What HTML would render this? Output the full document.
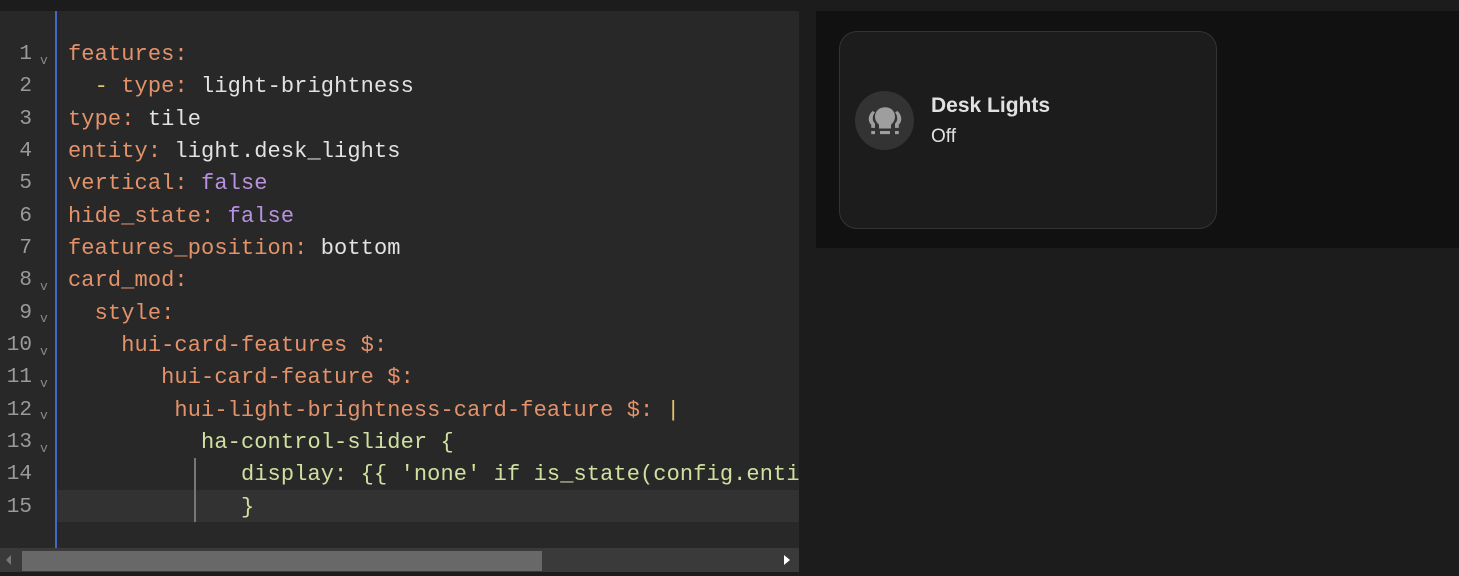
<!DOCTYPE html>
<html><head><meta charset="utf-8"><style>
*{margin:0;padding:0;box-sizing:border-box}
body{width:1459px;height:576px;background:#1c1c1c;position:relative;overflow:hidden;font-family:"Liberation Mono",monospace}
#ed{position:absolute;left:0;top:11px;width:799px;height:561px;background:#282828}
#bar{position:absolute;left:55px;top:11px;width:2px;height:537px;background:#4169c8}
.ln{position:absolute;left:0;width:32px;text-align:right;color:#9a9a9a;font-size:21px;height:32px;line-height:32px;margin-top:2px}
.fd{position:absolute;left:40px;color:#888;font-size:13px;line-height:12px}
.l{position:absolute;left:68px;white-space:pre;font-size:22px;letter-spacing:0.1px;height:32px;line-height:32px;color:#e2e2e2;margin-top:2px}
.k{color:#e3926a}.p{color:#b892e0}.g{color:#cfe0a0}.y{color:#e6c06e}
#act{position:absolute;left:57px;top:490px;width:742px;height:32px;background:#323232}
#guide{position:absolute;left:194px;top:458px;width:2px;height:64px;background:#777}
#sb{position:absolute;left:0;top:548px;width:799px;height:24px;background:#3a3a3a}
#th{position:absolute;left:22px;top:551px;width:520px;height:20px;background:#686868}
#rp{position:absolute;left:816px;top:11px;width:643px;height:237px;background:#111}
#card{position:absolute;left:839px;top:31px;width:378px;height:198px;background:#1c1c1c;border:1px solid #333;border-radius:18px}
#ic{position:absolute;left:855px;top:91px;width:59px;height:59px;border-radius:50%;background:#333}
.t{position:absolute;font-family:"Liberation Sans",sans-serif;color:#e1e1e1}
</style></head><body>
<div id="ed"></div>
<div id="act"></div>
<div id="guide"></div>
<div id="bar"></div>
<div class="ln" style="top:37px">1</div><div class="fd" style="top:55px">v</div>
<div class="ln" style="top:69px">2</div>
<div class="ln" style="top:102px">3</div>
<div class="ln" style="top:134px">4</div>
<div class="ln" style="top:166px">5</div>
<div class="ln" style="top:199px">6</div>
<div class="ln" style="top:231px">7</div>
<div class="ln" style="top:263px">8</div><div class="fd" style="top:281px">v</div>
<div class="ln" style="top:296px">9</div><div class="fd" style="top:313px">v</div>
<div class="ln" style="top:328px">10</div><div class="fd" style="top:346px">v</div>
<div class="ln" style="top:360px">11</div><div class="fd" style="top:378px">v</div>
<div class="ln" style="top:393px">12</div><div class="fd" style="top:410px">v</div>
<div class="ln" style="top:425px">13</div><div class="fd" style="top:443px">v</div>
<div class="ln" style="top:457px">14</div>
<div class="ln" style="top:490px">15</div>
<div class="l" style="top:37px"><span class="k">features:</span></div>
<div class="l" style="top:69px">  <span class="y">-</span> <span class="k">type:</span> light-brightness</div>
<div class="l" style="top:102px"><span class="k">type:</span> tile</div>
<div class="l" style="top:134px"><span class="k">entity:</span> light.desk_lights</div>
<div class="l" style="top:166px"><span class="k">vertical:</span> <span class="p">false</span></div>
<div class="l" style="top:199px"><span class="k">hide_state:</span> <span class="p">false</span></div>
<div class="l" style="top:231px"><span class="k">features_position:</span> bottom</div>
<div class="l" style="top:263px"><span class="k">card_mod:</span></div>
<div class="l" style="top:296px">  <span class="k">style:</span></div>
<div class="l" style="top:328px">    <span class="k">hui-card-features $:</span></div>
<div class="l" style="top:360px">       <span class="k">hui-card-feature $:</span></div>
<div class="l" style="top:393px">        <span class="k">hui-light-brightness-card-feature $:</span> <span class="y">|</span></div>
<div class="l" style="top:425px">          <span class="g">ha-control-slider {</span></div>
<div class="l" style="top:457px;width:731px;overflow:hidden">             <span class="g">display: {{ 'none' if is_state(config.entity, 'off') else 'flex' }};</span></div>
<div class="l" style="top:490px">             <span class="g">}</span></div>
<div id="sb"></div><div id="th"></div>
<div style="position:absolute;left:6px;top:555px;width:0;height:0;border-top:5px solid transparent;border-bottom:5px solid transparent;border-right:5px solid #777"></div>
<div style="position:absolute;left:784px;top:555px;width:0;height:0;border-top:5px solid transparent;border-bottom:5px solid transparent;border-left:6px solid #fff"></div>
<div id="rp"></div>
<div id="card"></div>
<div id="ic"></div>
<svg style="position:absolute;left:865px;top:104px" width="40" height="34" viewBox="2 1 32 26">
<g fill="#9e9e9e">
<path d="M18 3c-5 0-8 3.5-8 7.5 0 3 1.7 5 3.2 6.5V20h9.6v-3c1.5-1.5 3.2-3.5 3.2-6.5C26 6.5 23 3 18 3z"/>
<rect x="14" y="22" width="8" height="2.5"/>
<path d="M8 6c-2 2-3 4-3 6.5 0 2 1 3.5 2 4.5v2.5h3V16c-1-1-1.8-2.3-1.8-4 0-2 .8-3.8 1.8-5z"/>
<path d="M28 6c2 2 3 4 3 6.5 0 2-1 3.5-2 4.5v2.5h-3V16c1-1 1.8-2.3 1.8-4 0-2-.8-3.8-1.8-5z"/>
<rect x="7" y="22" width="3" height="2.5"/><rect x="26" y="22" width="3" height="2.5"/>
</g></svg>
<div class="t" style="left:931px;top:94px;font-size:21px;font-weight:bold">Desk Lights</div>
<div class="t" style="left:931px;top:126px;font-size:19px">Off</div>
</body></html>
